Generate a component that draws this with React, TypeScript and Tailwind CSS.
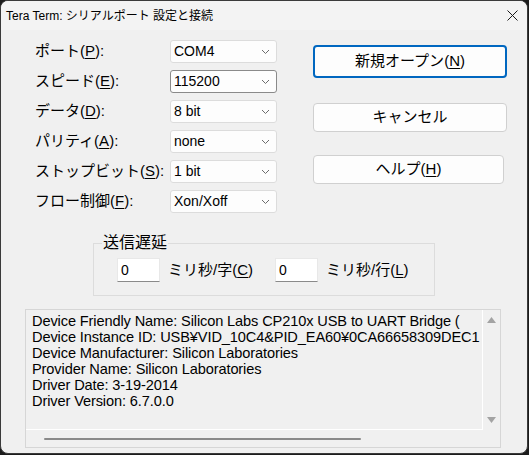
import type { ReactNode } from 'react';

const font = 'font-["Liberation_Sans","Noto_Sans_CJK_JP",sans-serif]';

function Key({ k }: { k: string }) {
  return (
    <>
      (<span className="underline underline-offset-2">{k}</span>)
    </>
  );
}

function Chevron() {
  return (
    <svg width="9" height="6" viewBox="0 0 9 6" className="shrink-0">
      <path d="M1 1 L4.5 4.5 L8 1" fill="none" stroke="#6b6b6b" strokeWidth="1" />
    </svg>
  );
}

function Combo({ value, focused }: { value: string; focused?: boolean }) {
  return (
    <div
      className={`flex h-[23px] w-[107px] items-center justify-between rounded-[3px] border bg-[#fdfdfd] pl-[3px] pr-[6px] text-[14px] text-black ${
        focused ? 'border-[#8a8a8a]' : 'border-[#dcdcdc]'
      }`}
    >
      <span>{value}</span>
      <Chevron />
    </div>
  );
}

function Row({ label, value, focused }: { label: ReactNode; value: string; focused?: boolean }) {
  return (
    <div className="flex h-[23px] items-center">
      <div className="w-[135px] text-[15px] text-black">{label}</div>
      <Combo value={value} focused={focused} />
    </div>
  );
}

function Button({ children, primary, className }: { children: ReactNode; primary?: boolean; className?: string }) {
  return (
    <div
      className={`flex items-center justify-center rounded-[4px] bg-[#fdfdfd] text-[15px] text-black ${
        primary ? 'border-2 border-[#0067c0]' : 'border border-[#d0d0d0]'
      } ${className ?? ''}`}
    >
      {children}
    </div>
  );
}

// only the part of each line that fits the box is shown
const info = [
  'Device Friendly Name: Silicon Labs CP210x USB to UART Bridge (',
  'Device Instance ID: USB¥VID_10C4&PID_EA60¥0CA66658309DEC1',
  'Device Manufacturer: Silicon Laboratories',
  'Provider Name: Silicon Laboratories',
  'Driver Date: 3-19-2014',
  'Driver Version: 6.7.0.0',
];

export default function App() {
  return (
    <div className={`h-[455px] w-[529px] bg-[#1c1c1c] ${font}`}>
      <div className="flex h-[454px] w-[528px] flex-col overflow-hidden rounded-[8px] border border-[#3a3a3a] bg-[#f0f0f0]">
        {/* title bar */}
        <div className="flex h-[29px] shrink-0 items-center justify-between bg-[#f3f3f3] pl-[5px] pr-[8px]">
          <span className="text-[12px] text-black">Tera Term: シリアルポート 設定と接続</span>
          <svg width="11" height="11" viewBox="0 0 11 11" className="mr-[1px]">
            <path d="M0.5 0.5 L10.5 10.5 M10.5 0.5 L0.5 10.5" stroke="#1a1a1a" strokeWidth="1" />
          </svg>
        </div>

        {/* settings + buttons */}
        <div className="flex pt-[10px]">
          <div className="ml-[34px] flex flex-col gap-[7px]">
            <Row label={<>ポート<Key k="P" />:</>} value="COM4" />
            <Row label={<>スピード<Key k="E" />:</>} value="115200" focused />
            <Row label={<>データ<Key k="D" />:</>} value="8 bit" />
            <Row label={<>パリティ<Key k="A" />:</>} value="none" />
            <Row label={<>ストップビット<Key k="S" />:</>} value="1 bit" />
            <Row label={<>フロー制御<Key k="F" />:</>} value="Xon/Xoff" />
          </div>
          <div className="ml-[36px] flex flex-col pt-[5px]">
            <Button primary className="h-[33px] w-[194px]">
              新規オープン<Key k="N" />
            </Button>
            <Button className="mt-[25px] h-[29px] w-[194px]">キャンセル</Button>
            <Button className="mt-[23px] h-[29px] w-[191px]">
              ヘルプ<Key k="H" />
            </Button>
          </div>
        </div>

        {/* transmit delay group */}
        <fieldset className="ml-[92px] mt-[20px] w-[342px] border border-[#dcdcdc] pb-[13px] pl-[8px] pr-[8px]">
          <legend className="px-[1px] text-[16px] leading-[20px] text-black">送信遅延</legend>
          <div className="ml-[15px] mt-[5px] flex items-center text-[15px] text-black">
            <div className="flex h-[24px] w-[43px] items-center border border-b-[#8a8a8a] border-[#e8e8e8] bg-white pl-[3px] text-[14px]">
              0
            </div>
            <span className="ml-[8px]">
              ミリ秒/字<Key k="C" />
            </span>
            <div className="ml-[22px] flex h-[24px] w-[43px] items-center border border-b-[#8a8a8a] border-[#e8e8e8] bg-white pl-[3px] text-[14px]">
              0
            </div>
            <span className="ml-[8px]">
              ミリ秒/行<Key k="L" />
            </span>
          </div>
        </fieldset>

        {/* device info */}
        <div className="ml-[24px] mt-[13px] grid h-[139px] w-[476px] grid-cols-[1fr_17px] grid-rows-[1fr_17px] border border-[#d6d6d6]">
          <div className="overflow-hidden border-b border-r border-white pl-[6px] pt-[3px] text-[14.6px] leading-[16px] tracking-[-0.12px] text-black">
            {info.map((l) => (
              <div key={l} className="whitespace-nowrap">
                {l}
              </div>
            ))}
          </div>
          <div className="flex flex-col items-center justify-between py-[7px]">
            <svg width="9" height="6" viewBox="0 0 9 6">
              <path d="M0 6 L4.5 0 L9 6 Z" fill="#a3a3a3" />
            </svg>
            <svg width="9" height="6" viewBox="0 0 9 6">
              <path d="M0 0 L4.5 6 L9 0 Z" fill="#a3a3a3" />
            </svg>
          </div>
          <div className="flex items-center pl-[18px]">
            <div className="h-[2px] w-[317px] rounded-full bg-[#8a8a8a]" />
          </div>
          <div />
        </div>
      </div>
    </div>
  );
}
